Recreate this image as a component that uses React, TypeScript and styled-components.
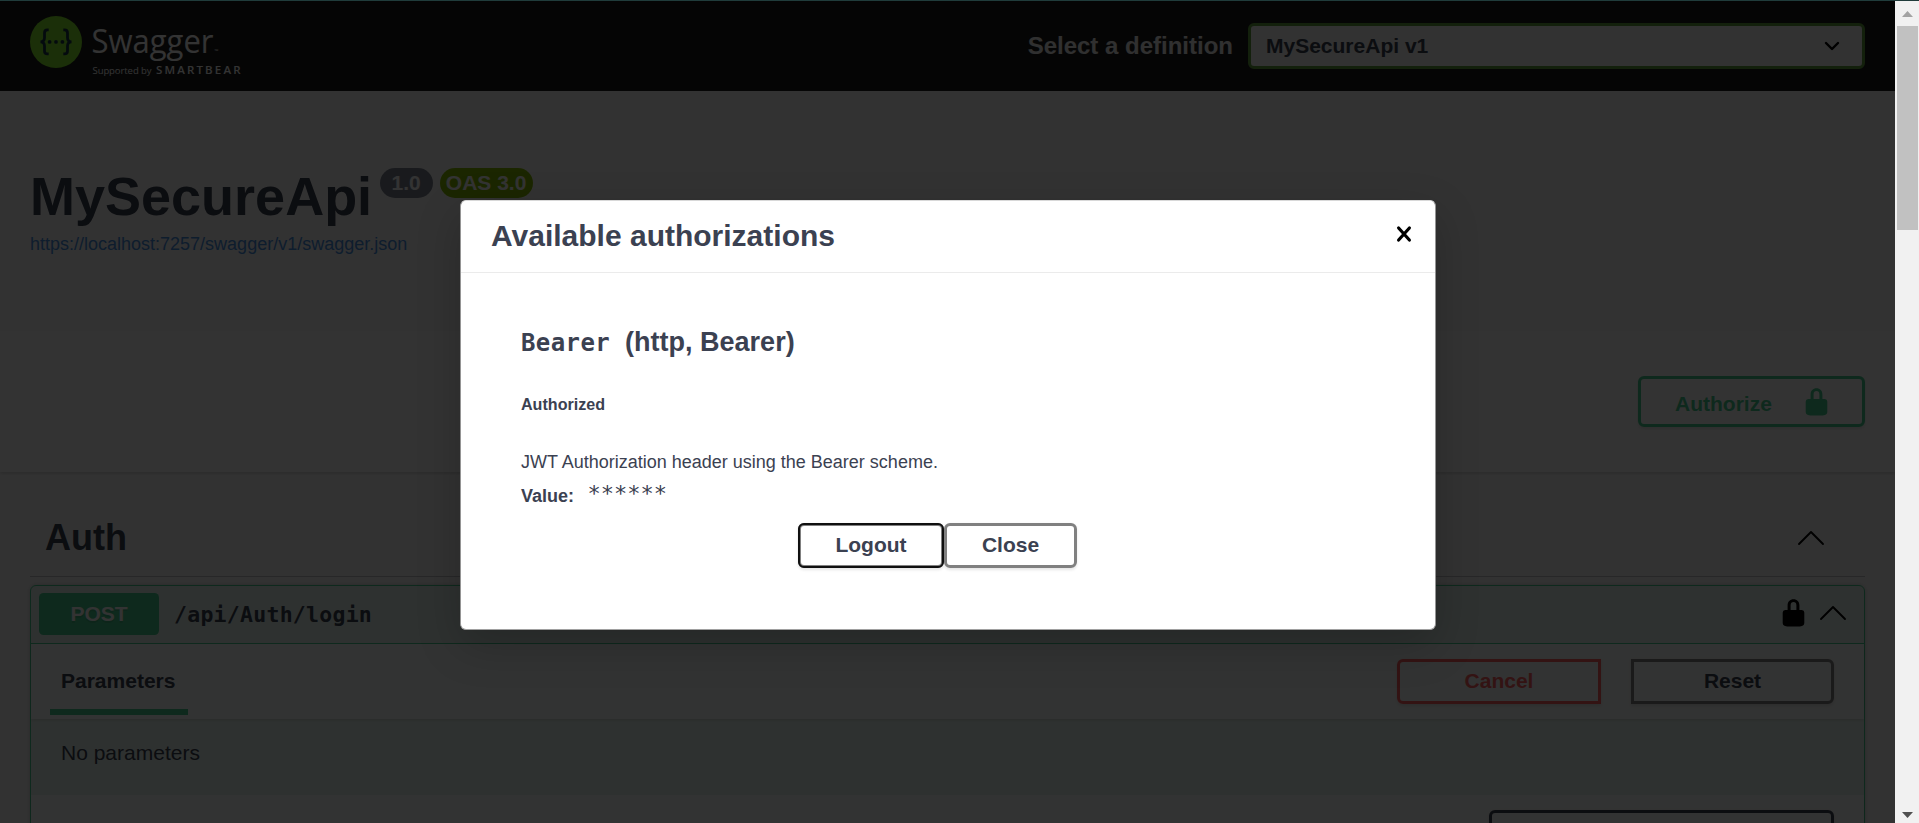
import React from "react";
import styled, { createGlobalStyle, css } from "styled-components";

const sans = `"Liberation Sans", Arial, sans-serif`;
const mono = `"DejaVu Sans Mono", "Liberation Mono", monospace`;
const ink = "#3b4151";
const green = "#49cc90";

const GlobalStyle = createGlobalStyle`
  *, *::before, *::after { box-sizing: border-box; }
  html, body { margin: 0; height: 100%; overflow: hidden; }
  h2, h3, h4, h5, h6, p { margin: 0; }
  button, select { font: inherit; }
`;

const Window = styled.div`
  display: flex;
  flex-direction: column;
  height: 823px;
  overflow: hidden;
  font-family: ${sans};
  color: ${ink};
`;

const WindowEdge = styled.div`
  flex: none;
  height: 1px;
  background: #203c3b;
`;

const Viewport = styled.div`
  flex: 1;
  min-height: 0;
  display: flex;
`;

const Page = styled.main`
  position: relative;
  flex: 1;
  min-width: 0;
  overflow: hidden;
  background: #fafafa;
`;

const Topbar = styled.header`
  display: flex;
  align-items: center;
  justify-content: space-between;
  height: 90px;
  padding: 0 30px;
  background: #1b1b1b;
`;

const DefinitionLabel = styled.label`
  display: flex;
  align-items: center;
  gap: 15px;
  color: #f0f0f0;
  font-size: 24px;
  font-weight: 700;
`;

const DefinitionSelect = styled.div`
  display: flex;
  align-items: center;
  justify-content: space-between;
  width: 617px;
  height: 46px;
  padding: 0 22px 0 15px;
  border: 3px solid #62a03f;
  border-radius: 6px;
  background: #f7f7f7;
  color: ${ink};
  font-size: 21px;
`;

const Info = styled.section`
  height: 240px;
  padding: 75px 30px 0;
`;

const TitleRow = styled.div`
  display: flex;
  align-items: flex-start;
  height: 67px;
`;

const Title = styled.h2`
  margin-right: 8px;
  font-size: 54px;
  line-height: 60px;
`;

const Badge = styled.span<{ $bg: string; $width: number }>`
  display: flex;
  align-items: center;
  justify-content: center;
  width: ${(p) => p.$width}px;
  height: 30px;
  margin: 2px 7px 0 0;
  padding-right: 1px;
  border-radius: 15px;
  background: ${(p) => p.$bg};
  color: #fff;
  font-size: 21px;
  font-weight: 700;
`;

const SpecLink = styled.a`
  display: block;
  margin-top: 1px;
  color: #4990e2;
  font-size: 18px;
  line-height: 21px;
`;

const SchemeBar = styled.section`
  display: flex;
  justify-content: flex-end;
  height: 141px;
  padding: 45px 30px 0;
  background: #fff;
  box-shadow: 0 1.5px 3px rgba(0, 0, 0, 0.15);
`;

const Button = styled.button<{
  $color?: string;
  $border?: string;
  $width: number;
  $radius?: string;
  $focused?: boolean;
}>`
  display: flex;
  align-items: center;
  justify-content: center;
  width: ${(p) => p.$width}px;
  height: 45px;
  padding: 0 0 1px;
  border: 3px solid ${(p) => p.$border ?? "#808080"};
  border-radius: ${(p) => p.$radius ?? "6px"};
  background: transparent;
  box-shadow: 0 1.5px 3px rgba(0, 0, 0, 0.1);
  color: ${(p) => p.$color ?? ink};
  font-size: 21px;
  font-weight: 700;
  ${(p) =>
    p.$focused &&
    css`
      outline: 2.5px solid #101010;
      outline-offset: -2px;
    `}
`;

const AuthorizeButton = styled(Button)`
  height: 51px;
  justify-content: space-between;
  padding: 0 34px;
`;

const AuthorizeLabel = styled.span`
  padding-top: 5px;
`;

const Tag = styled.section`
  margin: 30px 30px 0;
`;

const TagHeader = styled.h3`
  display: flex;
  align-items: center;
  justify-content: space-between;
  height: 75px;
  padding: 0 40px 2px 15px;
  border-bottom: 1px solid rgba(59, 65, 81, 0.3);
  font-size: 36px;
`;

const Operation = styled.article`
  margin-top: 8px;
  height: 600px;
  border: 1px solid ${green};
  border-radius: 6px;
  background: rgba(73, 204, 144, 0.1);
  box-shadow: 0 0 4px rgba(0, 0, 0, 0.19);
`;

const Summary = styled.div`
  display: flex;
  align-items: center;
  height: 58px;
  padding: 0 17px 1px 8px;
  border-bottom: 1px solid ${green};
`;

const Method = styled.span`
  display: flex;
  align-items: center;
  justify-content: center;
  width: 120px;
  height: 42px;
  border-radius: 4.5px;
  background: ${green};
  color: #fff;
  font-size: 21px;
  font-weight: 700;
  text-shadow: 0 1.5px 0 rgba(0, 0, 0, 0.1);
`;

const Path = styled.span`
  flex: 1;
  margin-left: 15px;
  font-family: ${mono};
  font-size: 21.5px;
  font-weight: 700;
  letter-spacing: 0.26px;
`;

const SummaryIcons = styled.span`
  display: flex;
  align-items: center;
  gap: 14px;
  padding-bottom: 3px;
`;

const SectionHeader = styled.div`
  display: flex;
  justify-content: space-between;
  height: 75px;
  padding: 15px 30px 0 19px;
  background: rgba(255, 255, 255, 0.8);
  box-shadow: 0 1.5px 3px rgba(0, 0, 0, 0.1);
`;

const Tab = styled.h4`
  align-self: flex-start;
  height: 56px;
  padding: 0 0 0 11px;
  width: 138px;
  border-bottom: 6px solid ${green};
  font-size: 21px;
  line-height: 44px;
`;

const ButtonGroup = styled.div`
  display: flex;
  gap: 30px;
`;

const EmptyNote = styled.p`
  height: 76px;
  padding: 22px 30px 0;
  font-size: 21px;
  line-height: 24px;
`;

const Backdrop = styled.div`
  position: absolute;
  inset: 0;
  background: rgba(0, 0, 0, 0.8);
`;

const Dialog = styled.section`
  position: absolute;
  top: 199px;
  left: 460px;
  width: 976px;
  height: 430px;
  border: 1px solid;
  border-color: #d8d8d8 #949494 #a0a0a0;
  border-radius: 6px;
  background: #fff;
  box-shadow: 0 15px 45px rgba(0, 0, 0, 0.2);
`;

const DialogHeader = styled.header`
  display: flex;
  align-items: center;
  justify-content: space-between;
  height: 72px;
  padding: 0 23px 2px 30px;
  border-bottom: 1px solid #ebebeb;
  font-size: 30px;
  font-weight: 700;
`;

const CloseMark = styled.svg`
  display: block;
  flex: none;
  margin-bottom: 3px;
`;

const DialogBody = styled.div`
  padding: 51px 60px 0;
`;

const SchemeName = styled.h4`
  display: flex;
  align-items: baseline;
  font-size: 27px;
  line-height: 36px;
`;

const SchemeCode = styled.code`
  margin-right: 15px;
  font-family: ${mono};
  font-size: 24px;
  letter-spacing: 0.4px;
`;

const Status = styled.h6`
  margin-top: 33px;
  font-size: 16.1px;
  line-height: 20px;
`;

const Description = styled.p`
  margin-top: 36px;
  font-size: 18px;
  line-height: 24px;
`;

const ValueRow = styled.div`
  display: flex;
  align-items: baseline;
  margin-top: 6px;
  height: 43px;
  line-height: 30px;
  font-size: 18px;
`;

const Secret = styled.code`
  margin-left: 13.5px;
  font-family: ${mono};
  font-size: 22px;
  transform: translateY(-1px);
`;

const DialogActions = styled.div`
  display: flex;
  justify-content: center;
  padding-right: 21px;
`;

const Scrollbar = styled.div`
  flex: none;
  display: flex;
  flex-direction: column;
  align-items: center;
  width: 24px;
  background: #f1f1f1;
`;

const ScrollArrow = styled.svg`
  flex: none;
  display: block;
  width: 24px;
  height: 25px;
`;

const ScrollTrack = styled.div`
  flex: 1;
`;

const Thumb = styled.div`
  width: 21px;
  height: 204px;
  background: #c1c1c1;
`;

const Icon = styled.svg`
  display: block;
  flex: none;
`;

const Logo = () => (
  <Icon width="220" height="66" viewBox="30 13 220 66">
    <circle cx="56" cy="42" r="26" fill="#85ea2d" />
    <g fill="none" stroke="#173647" strokeWidth="2.8">
      <path d="M48.7 29.900h-1.200q-3 0-3 3v4.900q0 4-4 4.100q4 .1 4 4.100v4.900q0 3 3 3h1.200" />
      <path d="M63.3 29.900h1.200q3 0 3 3v4.900q0 4 4 4.100q-4 .1-4 4.100v4.900q0 3-3 3h-1.200" />
    </g>
    <g fill="#173647">
      <circle cx="49.6" cy="41.9" r="1.9" />
      <circle cx="56" cy="41.9" r="1.9" />
      <circle cx="62.4" cy="41.9" r="1.9" />
    </g>
    <g fill="#fff" fontFamily="'Open Sans', 'Noto Sans', sans-serif">
      <text x="91.5" y="52.500" fontSize="33" fontWeight="400" textLength="122" lengthAdjust="spacingAndGlyphs">Swagger</text>
      <text x="214.500" y="53" fontSize="5" textLength="5">™</text>
      <text x="92.500" y="74" fontSize="9.500" fontWeight="400" textLength="59">Supported by</text>
      <text x="156" y="74" fontSize="11.500" fontWeight="600" textLength="84.500">SMARTBEAR</text>
    </g>
  </Icon>
);

const Lock = ({ color }: { color: string }) => (
  <Icon width="23" height="28" viewBox="0 0 23 28" fill={color}>
    <path d="M3.2 11H5.6V6.2C5.6 2.6 8 .2 11.5.2S17.400 2.600 17.400 6.200V11H19.800Q22.300 11.400 22.300 13.400V24.200Q22.200 26.300 20 27L17.800 27.600H5.200L3 27Q.8 26.300.7 24.200V13.400Q.8 11.300 3.200 11ZM8.600 11H14.400V6.200C14.400 4.100 13.300 3.100 11.500 3.100S8.600 4.100 8.600 6.200Z" />
  </Icon>
);

const ChevronUp = () => (
  <Icon width="28" height="16" viewBox="0 0 28 16" fill="none" stroke="#000" strokeWidth="1.9" strokeLinecap="round" strokeLinejoin="round">
    <path d="M2 14 14 2l12 12" />
  </Icon>
);

export default function App() {
  return (
    <Window>
      <GlobalStyle />
      <WindowEdge />
      <Viewport>
        <Page>
          <Topbar>
            <Logo />
            <DefinitionLabel>
              Select a definition
              <DefinitionSelect>
                MySecureApi v1
                <Icon width="16" height="10" viewBox="0 0 16 10" fill="none" stroke="#000" strokeWidth="2.4" strokeLinecap="round" strokeLinejoin="round">
                  <path d="M2 2l6 6 6-6" />
                </Icon>
              </DefinitionSelect>
            </DefinitionLabel>
          </Topbar>
          <Info>
            <TitleRow>
              <Title>MySecureApi</Title>
              <Badge $bg="#7d8492" $width={53}>1.0</Badge>
              <Badge $bg="#89bf04" $width={93}>OAS 3.0</Badge>
            </TitleRow>
            <SpecLink>https://localhost:7257/swagger/v1/swagger.json</SpecLink>
          </Info>
          <SchemeBar>
            <AuthorizeButton $color={green} $border={green} $width={227}>
              <AuthorizeLabel>Authorize</AuthorizeLabel>
              <Lock color={green} />
            </AuthorizeButton>
          </SchemeBar>
          <Tag>
            <TagHeader>
              Auth
              <ChevronUp />
            </TagHeader>
            <Operation>
              <Summary>
                <Method>POST</Method>
                <Path>/api/Auth/login</Path>
                <SummaryIcons>
                  <Lock color="#000" />
                  <ChevronUp />
                </SummaryIcons>
              </Summary>
              <SectionHeader>
                <Tab>Parameters</Tab>
                <ButtonGroup>
                  <Button $color="#ff6060" $border="#ff6060" $width={204} $radius="6px 0 0 6px">Cancel</Button>
                  <Button $width={203} $radius="0 6px 6px 0">Reset</Button>
                </ButtonGroup>
              </SectionHeader>
              <EmptyNote>No parameters</EmptyNote>
              <SectionHeader>
                <span />
                <Button $border={ink} $width={345} />
              </SectionHeader>
            </Operation>
          </Tag>
          <Backdrop />
          <Dialog>
            <DialogHeader>
              Available authorizations
              <CloseMark width="16" height="18" viewBox="0 0 16 18" stroke="#000" strokeWidth="3.2" strokeLinecap="round">
                <path d="M2.600 3l10.800 12M13.400 3L2.600 15" />
              </CloseMark>
            </DialogHeader>
            <DialogBody>
              <SchemeName>
                <SchemeCode>Bearer</SchemeCode>
                (http, Bearer)
              </SchemeName>
              <Status>Authorized</Status>
              <Description>JWT Authorization header using the Bearer scheme.</Description>
              <ValueRow>
                <b>Value:</b>
                <Secret>******</Secret>
              </ValueRow>
              <DialogActions>
                <Button $focused $width={146}>Logout</Button>
                <Button $width={133}>Close</Button>
              </DialogActions>
            </DialogBody>
          </Dialog>
        </Page>
        <Scrollbar>
          <ScrollArrow viewBox="0 0 24 25" fill="#a3a3a3">
            <path d="M12.500 10l5.500 6h-11z" />
          </ScrollArrow>
          <Thumb />
          <ScrollTrack />
          <ScrollArrow viewBox="0 0 24 25" fill="#505050">
            <path d="M12.500 20l5.500-6h-11z" />
          </ScrollArrow>
        </Scrollbar>
      </Viewport>
    </Window>
  );
}
